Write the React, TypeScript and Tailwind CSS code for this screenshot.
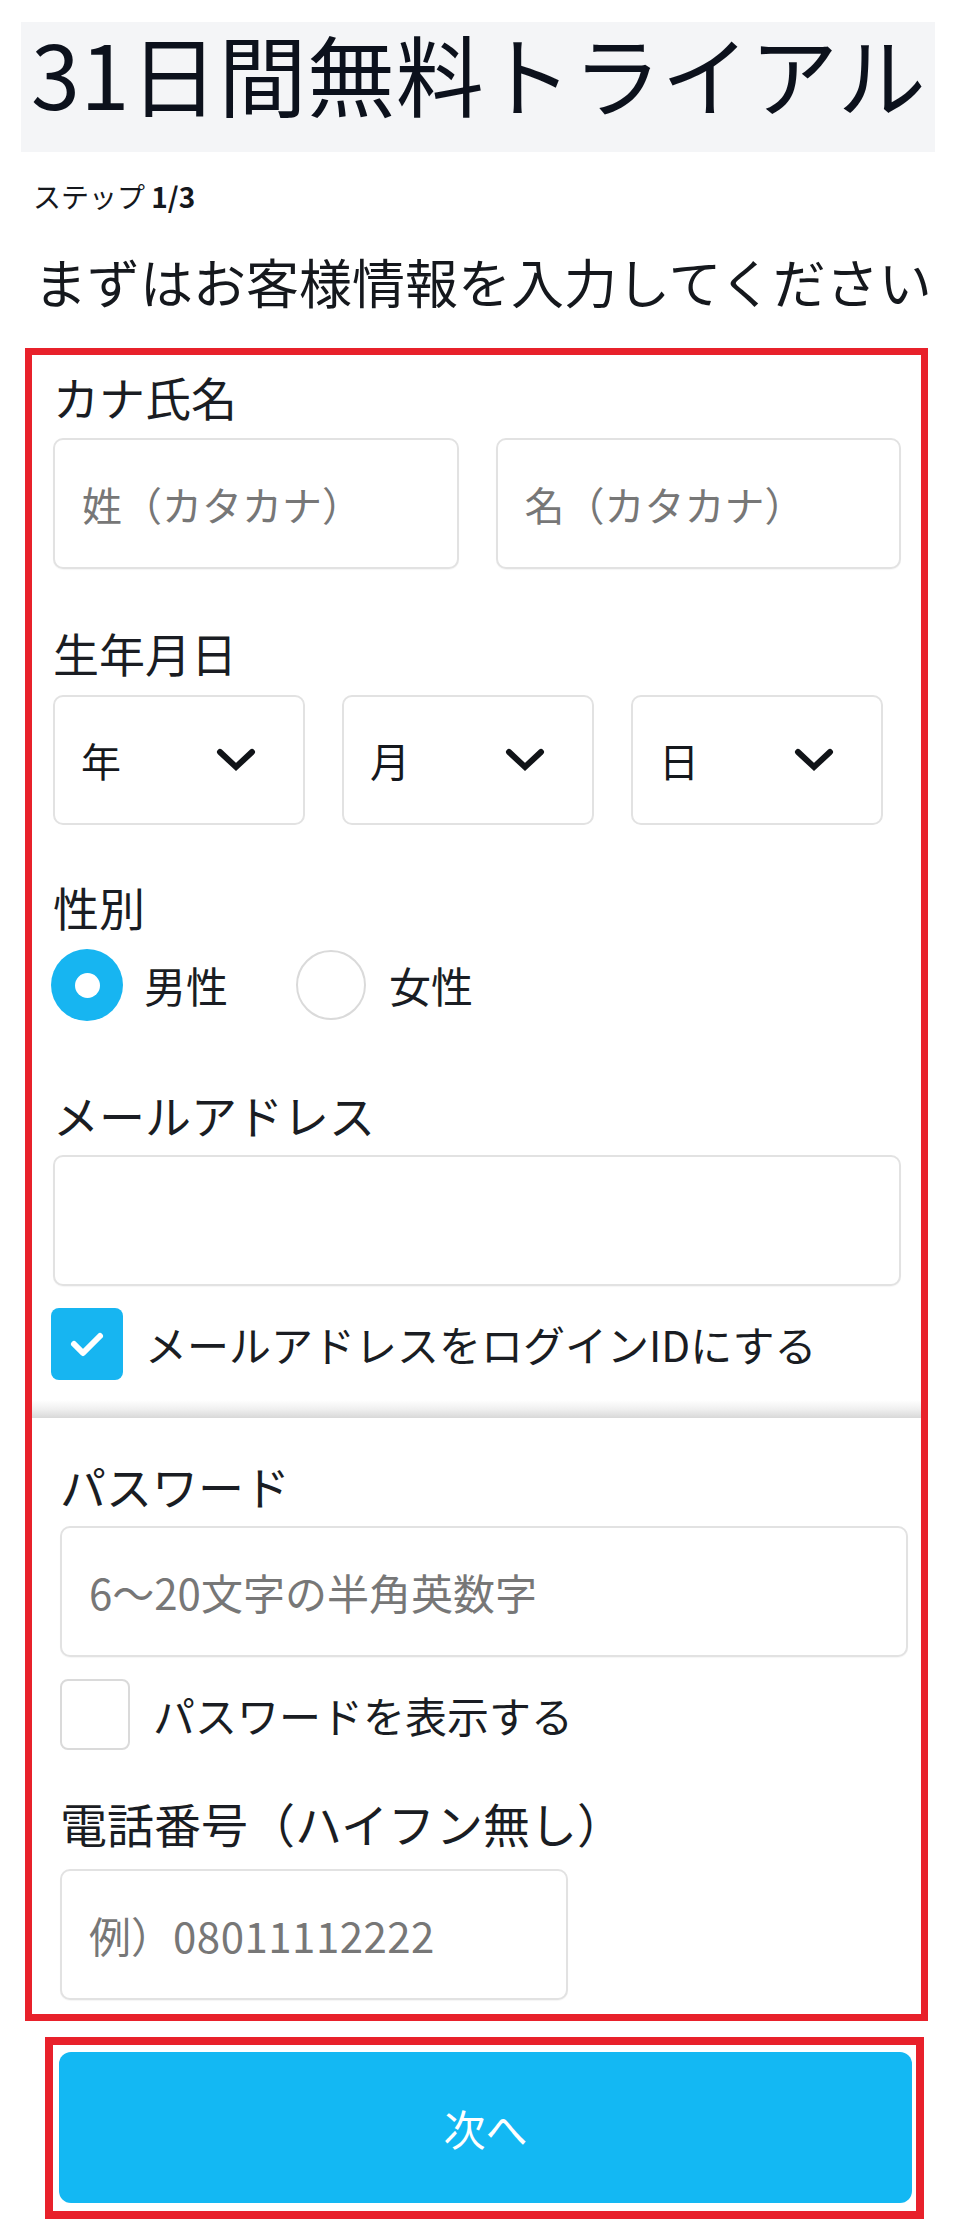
import React from "react";

const Chevron = () => (
  <svg width="40" height="24" viewBox="0 0 40 24" className="shrink-0">
    <path d="M4 4 L20 19 L36 4" fill="none" stroke="#111418" strokeWidth="6" strokeLinecap="round" strokeLinejoin="miter" />
  </svg>
);

const TextInput = ({ placeholder, className = "" }: { placeholder?: React.ReactNode; className?: string }) => (
  <div
    className={`h-[131px] rounded-[10px] border-2 border-[#e2e2e2] bg-white flex items-center pl-[27px] leading-none text-[#777777] shadow-[0_1px_1px_rgba(0,0,0,0.04)] whitespace-nowrap ${className}`}
  >
    {placeholder}
  </div>
);

const Select = ({ label }: { label: string }) => (
  <div className="w-[252px] h-[130px] rounded-[10px] border-2 border-[#e2e2e2] bg-white flex items-center justify-between pl-[26px] pr-[47px]">
    <span className="text-[40px] leading-none text-[#15181d]">{label}</span>
    <Chevron />
  </div>
);

const Label = ({ children, className = "" }: { children: React.ReactNode; className?: string }) => (
  <div className={`leading-none text-[#1a1d23] whitespace-nowrap ${className}`}>{children}</div>
);

export default function App() {
  return (
    <div className="w-[976px] h-[2236px] bg-white overflow-hidden font-['Noto_Sans_CJK_JP','Noto_Sans',sans-serif] text-[#1a1d23]">
      {/* Title */}
      <div className="mt-[22px] ml-[21px] w-[914px] h-[130px] bg-[#f4f5f7] pl-[10px] pt-[6px]">
        <h1 className="text-[88px] leading-none font-normal text-[#0c111c] whitespace-nowrap tracking-[0.6px]">
          31日間無料トライアル
        </h1>
      </div>

      {/* Step */}
      <div className="mt-[30px] ml-[33px] text-[28px] leading-none text-[#15181d] whitespace-nowrap">
        ステップ <span className="font-bold">1/3</span>
      </div>
      <div className="mt-[45px] ml-[34px] text-[53px] leading-none text-[#15181d] whitespace-nowrap">
        まずはお客様情報を入力してください
      </div>

      {/* Form box */}
      <div className="mt-[40px] ml-[25px] w-[903px] border-[7px] border-[#e8212b] bg-white pb-[14px]">
        <div className="pl-[21px] pr-[20px] pt-[18px]">
          <Label className="text-[46px]">カナ氏名</Label>
          <div className="mt-[19px] flex gap-[37px]">
            <TextInput placeholder="姓（カタカナ）" className="flex-1 text-[40px]" />
            <TextInput placeholder="名（カタカナ）" className="flex-1 text-[40px]" />
          </div>

          <Label className="mt-[60px] text-[46px]">生年月日</Label>
          <div className="mt-[20px] flex gap-[37px]">
            <Select label="年" />
            <Select label="月" />
            <Select label="日" />
          </div>

          <Label className="mt-[58px] text-[46px]">性別</Label>
          <div className="mt-[20px] flex items-center -ml-[2px]">
            <div className="w-[72px] h-[72px] rounded-full bg-[#17b5f1] flex items-center justify-center">
              <div className="w-[25px] h-[25px] rounded-full bg-white" />
            </div>
            <span className="ml-[21px] text-[42px] leading-none text-[#1a1d23]">男性</span>
            <div className="ml-[68px] w-[70px] h-[70px] rounded-full border-2 border-[#dadada] bg-white" />
            <span className="ml-[23px] text-[42px] leading-none text-[#1a1d23]">女性</span>
          </div>

          <Label className="mt-[70px] text-[46px]">メールアドレス</Label>
          <TextInput className="mt-[18px]" />
          <div className="mt-[22px] flex items-center -ml-[2px]">
            <div className="w-[72px] h-[72px] rounded-[8px] bg-[#17b5f1] flex items-center justify-center">
              <svg width="36" height="28" viewBox="0 0 36 28">
                <path d="M5 14 L14 23 L31 6" fill="none" stroke="white" strokeWidth="6" strokeLinecap="round" strokeLinejoin="round" />
              </svg>
            </div>
            <span className="ml-[22px] text-[42px] leading-none text-[#1a1d23] whitespace-nowrap">
              メールアドレスをログインIDにする
            </span>
          </div>
        </div>

        {/* seam between captures */}
        <div className="mt-[20px] h-[18px] bg-gradient-to-b from-white via-[#f0f0f0] to-[#d8d8d8]" />

        <div className="pl-[28px] pr-[13px]">
          <Label className="mt-[44px] text-[46px]">パスワード</Label>
          <TextInput className="mt-[18px] h-[130px] text-[42px]" placeholder="6〜20文字の半角英数字" />
          <div className="mt-[22px] flex items-center">
            <div className="w-[70px] h-[71px] rounded-[8px] border-2 border-[#dadada] bg-white" />
            <span className="ml-[23px] text-[42px] leading-none text-[#1a1d23] whitespace-nowrap">
              パスワードを表示する
            </span>
          </div>

          <Label className="mt-[49px] text-[47px]">電話番号（ハイフン無し）</Label>
          <TextInput
            className="mt-[23px] w-[508px] h-[130px] text-[42px]"
            placeholder={
              <>
                例）<span className="tracking-[0.5px]">08011112222</span>
              </>
            }
          />
        </div>
      </div>

      {/* Button box */}
      <div className="mt-[16px] ml-[45px] w-[879px] border-[8px] border-[#e8212b] pt-[7px] pb-[8px] pl-[6px] pr-[4px] bg-white">
        <button className="w-full h-[151px] rounded-[12px] bg-[#13b8f3] text-white text-[42px] leading-none flex items-center justify-center">
          次へ
        </button>
      </div>
    </div>
  );
}
